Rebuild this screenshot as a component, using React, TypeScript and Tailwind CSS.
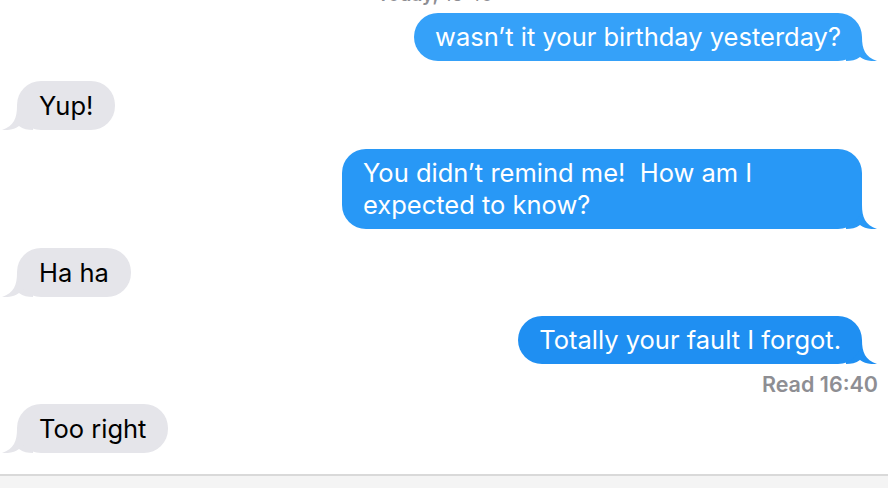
import React from 'react';

const font = { fontFamily: 'Inter, "Liberation Sans", sans-serif' };

const OutTail: React.FC<{ color: string }> = ({ color }) => (
  <svg className="absolute bottom-0 right-[-15px]" width="31" height="24" viewBox="0 0 31 24" fill={color}>
    <path d="M0 0 H16 C16 12 19 20 31 24 C24 24.6 18 23 14 20 C10 23 5 24 0 24 Z" />
  </svg>
);

const InTail: React.FC<{ color: string }> = ({ color }) => (
  <svg className="absolute bottom-0 left-[-15px]" width="31" height="24" viewBox="0 0 31 24" fill={color}>
    <path d="M31 0 H15 C15 12 12 20 0 24 C7 24.6 13 23 17 20 C21 23 26 24 31 24 Z" />
  </svg>
);

const Out: React.FC<{ color: string; className?: string; children: React.ReactNode }> = ({ color, className = '', children }) => (
  <div className={`flex justify-end pr-[26px] ${className}`}>
    <div className="relative">
      <OutTail color={color} />
      <div
        className="relative rounded-[24px] px-[21px] py-[8px] text-[25.5px] leading-[32px] text-white whitespace-nowrap"
        style={{ backgroundColor: color }}
      >
        {children}
      </div>
    </div>
  </div>
);

const In: React.FC<{ className?: string; children: React.ReactNode }> = ({ className = '', children }) => (
  <div className={`flex justify-start pl-[17px] ${className}`}>
    <div className="relative">
      <InTail color="#e5e5ea" />
      <div className="relative rounded-[24px] bg-[#e5e5ea] px-[22px] py-[8px] text-[25.5px] leading-[33px] text-black">
        {children}
      </div>
    </div>
  </div>
);

export default function App() {
  return (
    <div className="w-[888px] h-[488px] bg-white overflow-hidden flex flex-col" style={font}>
      <div className="h-[22px] -mt-[16px] pr-[18px] text-center text-[19px] leading-[22px] text-[#8e8e93]">
        <span className="font-semibold">Today,</span> 16:40
      </div>
      <Out color="#35a1f9" className="mt-[7px]">wasn’t it your birthday yesterday?</Out>
      <In className="mt-[20px]">Yup!</In>
      <Out color="#2898f6" className="mt-[19px]">
        <div className="w-[478px]">
          You didn’t remind me!&nbsp; How am I
          <br />
          expected to know?
        </div>
      </Out>
      <In className="mt-[19px]">Ha ha</In>
      <Out color="#1f8ff2" className="mt-[19px]">Totally your fault I forgot.</Out>
      <div className="mt-[7px] pr-[10px] text-right text-[21.5px] leading-[26px] font-semibold text-[#8e8e93]">
        Read 16:40
      </div>
      <In className="mt-[7px]">Too right</In>
      <div className="mt-auto h-[14px] border-t-2 border-[#d9d9d9] bg-[#f4f4f4]" />
    </div>
  );
}
